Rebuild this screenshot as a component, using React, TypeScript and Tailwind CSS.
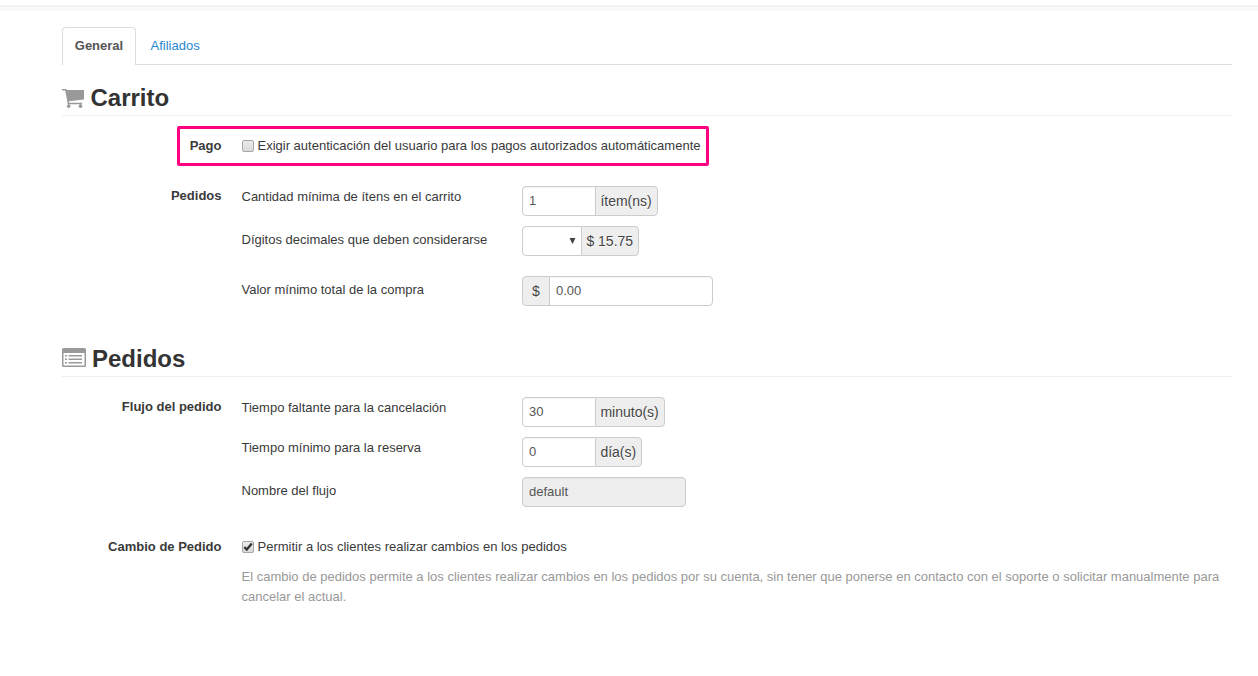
import type { ReactNode } from "react";

const inputBase =
  "block h-[30px] border border-[#ccc] bg-white px-[6px] pb-[2px] text-[13px] leading-5 text-[#555] outline-none shadow-[inset_0_1px_1px_rgba(0,0,0,0.04)]";

function Heading({ icon, children, className }: { icon: ReactNode; children: ReactNode; className: string }) {
  return (
    <h2 className={`flex h-[38px] items-center border-b border-[#eee] text-[24px] font-bold leading-9 text-[#333] ${className}`}>
      {icon}
      <span className="pt-[2px]">{children}</span>
    </h2>
  );
}

function Addon({ children, side }: { children: ReactNode; side: "left" | "right" }) {
  return (
    <span
      className={`h-[30px] shrink-0 border border-[#ccc] bg-[#eee] text-[14px] leading-[29px] text-[#444] [text-shadow:0_1px_0_#fff] ${
        side === "left" ? "w-[28px] rounded-l-[4px] pl-[9px]" : "-ml-px rounded-r-[4px] pl-[4.4px] pr-[5.2px]"
      }`}
    >
      {children}
    </span>
  );
}

function Label({ children, className }: { children?: ReactNode; className?: string }) {
  return <div className={`w-[160px] shrink-0 pr-[0.5px] text-right font-bold ${className ?? ""}`}>{children}</div>;
}

function Field({ group, text, textClass, children }: { group?: string; text: string; textClass: string; children: ReactNode }) {
  return (
    <div className="flex h-[30px]">
      <Label>{group}</Label>
      <div className={`ml-[19.5px] w-[280.5px] shrink-0 ${textClass}`}>{text}</div>
      <div className="flex">{children}</div>
    </div>
  );
}

function Checkbox({ checked }: { checked?: boolean }) {
  return (
    <span className="mr-[3.5px] grid size-[12px] shrink-0 place-items-center rounded-[2px] border border-[#a6a6a6] bg-linear-to-b from-[#ececec] to-[#d9d9d9]">
      {checked && (
        <svg viewBox="0 0 10 10" className="size-[10px]" fill="none" stroke="#333" strokeWidth="2.3">
          <path d="M1.3 5.2 3.8 7.6 8.8 1.6" />
        </svg>
      )}
    </span>
  );
}

function CartIcon() {
  return (
    <svg viewBox="0 0 22 19" className="mr-[6.5px] mt-[3px] h-[19px] w-[22px]" fill="#999">
      <path d="M0 0h4.3l.5 1H22v9.5L6.8 12.2l.4 1.5H20v1.5H5.8L3.2 1.4H0Z" />
      <circle cx="6.7" cy="17.2" r="1.8" />
      <circle cx="18.5" cy="17.2" r="1.8" />
      <path d="M6 14.5h1.4V16H6zM17.8 14.5h1.4V16h-1.4z" />
    </svg>
  );
}

function ListIcon() {
  return (
    <svg viewBox="0 0 24 19" className="mr-[6px] h-[19px] w-[24px]">
      <rect width="24" height="19" rx="1.5" fill="#999" />
      <path d="M1.5 5h21v12.5h-21z" fill="#fff" />
      <path d="M3 7h2v1.5H3zM6.5 7H20v1.5H6.5zM3 10.5h2V12H3zM6.5 10.5H20V12H6.5zM3 14h2v1.5H3zM6.5 14H20v1.5H6.5z" fill="#999" />
    </svg>
  );
}

export default function App() {
  return (
    <div className="h-[676px] overflow-hidden bg-white font-['Liberation_Sans',Arial,sans-serif] text-[13px] leading-5 text-[#3a3a3a]">
      <div className="mt-[5px] h-[2px] bg-[#f3f3f3]" />
      <div className="h-1 bg-[#f9f9f9]" />
      <main className="ml-[62px] mt-4 w-[1170px]">
        <nav className="flex h-[38px] border-b border-[#ddd]">
          <a className="h-[38px] w-[74px] rounded-t-[4px] border border-b-0 border-[#ddd] bg-white pt-2 text-center font-bold text-[#555]">General</a>
          <a className="ml-[14.5px] pt-[9px] text-[#2a88d4]">Afiliados</a>
        </nav>

        <Heading icon={<CartIcon />} className="mt-[13px]">Carrito</Heading>
        <div className="ml-[115px] mt-[10px] flex h-10 w-[532px] items-center rounded-[2px] border-[3px] border-[#ff0080]">
          <Label className="w-[42px]!">Pago</Label>
          <label className="ml-5 flex items-center whitespace-nowrap">
            <Checkbox />
            Exigir autenticación del usuario para los pagos autorizados automáticamente
          </label>
        </div>
        <div className="mt-5 flex flex-col gap-[10px]">
          <Field group="Pedidos" text="Cantidad mínima de ítens en el carrito" textClass="pt-px">
            <input className={`${inputBase} w-[74px] rounded-l-[4px]`} defaultValue="1" />
            <Addon side="right">ítem(ns)</Addon>
          </Field>
          <Field text="Dígitos decimales que deben considerarse" textClass="pt-1">
            <div className="flex h-[30px] w-[60px] items-center justify-end rounded-l-[4px] border border-[#ccc] pr-[5px]">
              <svg viewBox="0 0 7 6" className="h-[6px] w-[7px]" fill="#444"><path d="M.5 0h6L3.5 6Z" /></svg>
            </div>
            <Addon side="right">$ 15.75</Addon>
          </Field>
        </div>
        <div className="mt-5">
          <Field text="Valor mínimo total de la compra" textClass="pt-1">
            <Addon side="left">$</Addon>
            <input className={`${inputBase} -ml-px w-[164px] rounded-r-[4px]`} defaultValue="0.00" />
          </Field>
        </div>

        <Heading icon={<ListIcon />} className="mt-[33px]">Pedidos</Heading>
        <div className="mt-5 flex flex-col gap-[10px]">
          <Field group="Flujo del pedido" text="Tiempo faltante para la cancelación" textClass="pt-px">
            <input className={`${inputBase} w-[74px] rounded-l-[4px]`} defaultValue="30" />
            <Addon side="right">minuto(s)</Addon>
          </Field>
          <Field text="Tiempo mínimo para la reserva" textClass="pt-px">
            <input className={`${inputBase} w-[74px] rounded-l-[4px]`} defaultValue="0" />
            <Addon side="right">día(s)</Addon>
          </Field>
          <Field text="Nombre del flujo" textClass="pt-1">
            <input className={`${inputBase} w-[164px] rounded-[4px] bg-[#eee]!`} defaultValue="default" readOnly />
          </Field>
        </div>
        <div className="mt-[30px] flex">
          <Label>Cambio de Pedido</Label>
          <div className="ml-5 flex-1">
            <label className="flex items-center">
              <Checkbox checked />
              Permitir a los clientes realizar cambios en los pedidos
            </label>
            <p className="-ml-[0.5px] mt-[10px] text-[#999]">
              El cambio de pedidos permite a los clientes realizar cambios en los pedidos por su cuenta, sin tener que ponerse en contacto con el soporte o solicitar manualmente para cancelar el actual.
            </p>
          </div>
        </div>
      </main>
    </div>
  );
}
